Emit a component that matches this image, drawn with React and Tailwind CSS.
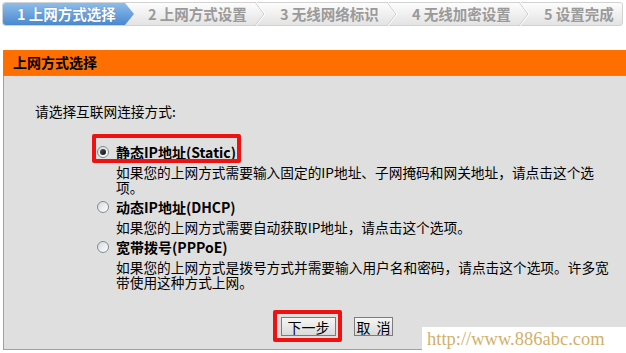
import React from "react";

function Chevron() {
  return (
    <svg width="12" height="24" viewBox="0 0 12 24" className="shrink-0">
      <polyline points="1,0 10,12 1,24" fill="none" stroke="#c9c9c9" strokeWidth="1" />
      <polyline points="2,0 11,12 2,24" fill="none" stroke="#ffffff" strokeWidth="1" />
    </svg>
  );
}

function Radio({ checked }) {
  return (
    <span className="relative flex h-[12px] w-[12px] shrink-0 items-center justify-center rounded-full border border-[#7f8a96] bg-gradient-to-br from-[#d6d9dd] to-white">
      {checked && <span className="h-[6px] w-[6px] rounded-full bg-gradient-to-br from-[#555] to-[#111]" />}
    </span>
  );
}

function Option({ checked, label, lines, boxed }) {
  return (
    <div className="flex flex-col">
      <div className="relative flex h-[20px] items-center gap-[7px]">
        <Radio checked={checked} />
        <span className="text-[14px] font-bold text-black leading-[20px] whitespace-nowrap">{label}</span>
        {boxed && (
          <span className="absolute left-[-5px] top-[-8px] h-[29px] w-[149px] rounded-[2px] border-[4px] border-[#ee1111]" />
        )}
      </div>
      <div className="ml-[19px] mt-[2.5px] mb-[2.5px] flex flex-col text-[13.7px] leading-[15px] text-black whitespace-nowrap">
        {lines.map((l) => (
          <div key={l} className="h-[15px]">{l}</div>
        ))}
      </div>
    </div>
  );
}

export default function App() {
  const steps = ["2 上网方式设置", "3 无线网络标识", "4 无线加密设置", "5 设置完成"];
  return (
    <div className="relative h-[353px] w-[626px] overflow-hidden bg-white font-['Noto_Sans_CJK_SC',sans-serif]">
      {/* step bar */}
      <div className="ml-[2px] mr-[3px] mt-[2px] flex h-[24px] items-stretch rounded-[3px] border border-[#d2d2d2] bg-gradient-to-b from-[#fdfdfd] to-[#e3e3e3]">
        <div className="flex w-[131px] shrink-0 items-center rounded-l-[3px] bg-gradient-to-b from-[#8dbdea] to-[#4a88cf] pl-[14px] text-[14.5px] font-bold text-white [clip-path:polygon(0_0,122px_0,131px_50%,122px_100%,0_100%)] [text-shadow:0_0_1px_#3a6fa8]">
          1 上网方式选择
        </div>
        {steps.map((s, i) => (
          <div key={s} className={`flex items-center ${i < 3 ? "w-[132px]" : "flex-1"} shrink-0`}>
            <span className="flex-1 pl-[14px] text-[14.5px] font-bold text-[#9a9a9a] whitespace-nowrap">{s}</span>
            {i < 3 && <Chevron />}
          </div>
        ))}
      </div>

      {/* panel */}
      <div className="ml-[3px] mt-[24px]">
        <div className="flex h-[26px] items-center bg-[#ff6f00] pl-[10px] text-[14px] font-bold text-black border-b border-[#c9824a]">
          上网方式选择
        </div>
        <div className="h-[274px] border-l border-b border-[#f08a3c] bg-[#dfdfdf]">
          <div className="pl-[31px] pt-[28px] text-[13.7px] leading-[15px] text-black">请选择互联网连接方式:</div>
          <div className="mt-[23px] flex flex-col pl-[93px]">
            <Option
              checked
              boxed
              label="静态IP地址(Static)"
              lines={["如果您的上网方式需要输入固定的IP地址、子网掩码和网关地址，请点击这个选", "项。"]}
            />
            <Option label="动态IP地址(DHCP)" lines={["如果您的上网方式需要自动获取IP地址，请点击这个选项。"]} />
            <Option
              label="宽带拨号(PPPoE)"
              lines={["如果您的上网方式是拨号方式并需要输入用户名和密码，请点击这个选项。许多宽", "带使用这种方式上网。"]}
            />
          </div>
          <div className="mt-[25px] flex items-center gap-[18px] pl-[277px]">
            <div className="relative">
              <button className="flex h-[19px] w-[55px] items-center justify-center gap-[1px] border border-[#7c7c7c] bg-gradient-to-b from-[#f6f6f6] to-[#dadada] text-[14px] leading-none text-black">
                下一步
              </button>
              <span className="absolute left-[-8px] top-[-7px] h-[32px] w-[69px] rounded-[2px] border-[4px] border-[#ee1111]" />
            </div>
            <button className="flex h-[19px] w-[39px] items-center justify-center gap-[6px] border border-[#7c7c7c] bg-gradient-to-b from-[#f6f6f6] to-[#dadada] text-[14px] leading-none text-black">
              <span>取</span>
              <span>消</span>
            </button>
          </div>
        </div>
      </div>

      {/* watermark */}
      <div className="absolute bottom-0 right-0 flex h-[26px] w-[204px] items-center bg-white pl-[5px] font-['Liberation_Serif',serif] text-[18.5px] text-[#d3b06b]">
        http://www.886abc.com
      </div>
    </div>
  );
}
